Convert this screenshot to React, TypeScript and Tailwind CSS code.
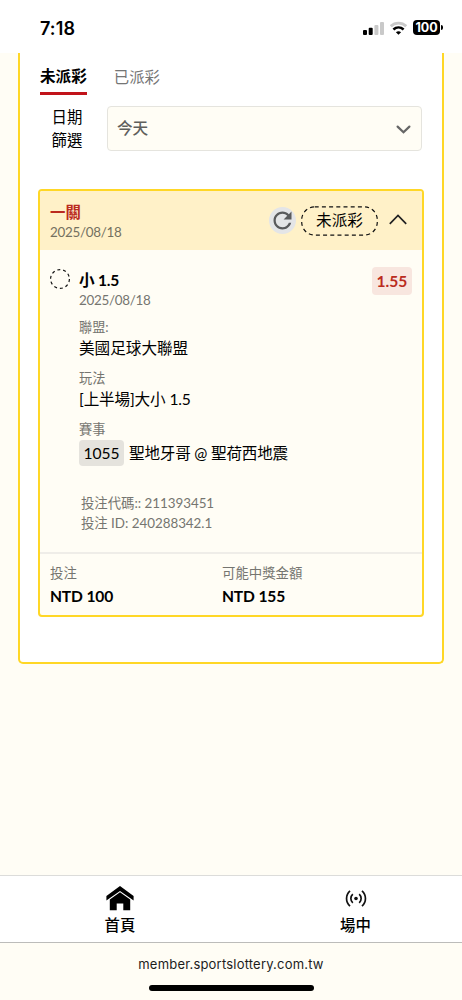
function StatusBar() {
  return (
    <div className="flex h-[53px] shrink-0 items-start justify-between bg-white pt-5 pr-[19px] pl-10">
      <span className="h-4 font-['Inter'] text-[18px] leading-[17px] font-semibold tracking-[0.1px] text-black">7:18</span>
      <div className="flex items-center gap-[6px]">
        <svg width="21" height="14" viewBox="0 0 21 14">
          <rect x="0" y="9" width="4" height="5" rx="1" fill="#000" />
          <rect x="5.7" y="6.8" width="4" height="7.2" rx="1" fill="#000" />
          <rect x="11.4" y="4" width="4" height="10" rx="1" fill="#c9c9c9" />
          <rect x="17" y="1" width="4" height="13" rx="1" fill="#c9c9c9" />
        </svg>
        <svg width="17" height="14" viewBox="0 0 17 14" fill="none">
          <path d="M0.8 5.3C5 1 12 1 16.2 5.3" stroke="#c9c9c9" strokeWidth="2.8" />
          <path d="M3.4 8.5C6.4 5.7 10.6 5.7 13.6 8.5" stroke="#000" strokeWidth="2.5" />
          <path d="M8.5 13.8L5.9 11.2C7.4 9.9 9.6 9.9 11.1 11.2Z" fill="#000" />
        </svg>
        <div className="flex items-center gap-px">
          <span className="flex h-[15px] w-[27px] items-center justify-center rounded-[4px] bg-black pt-px font-['Inter'] text-[12.5px] leading-[14px] font-bold text-white">100</span>
          <span className="h-[5px] w-[2px] rounded-r-full bg-black"></span>
        </div>
      </div>
    </div>
  );
}

function Tabs() {
  return (
    <div className="flex items-start gap-[27px] pl-5">
      <div className="border-b-[3px] border-[#c1131a] pb-[4px] text-[15.6px] leading-[24px] font-bold text-black">未派彩</div>
      <div className="pt-px text-[15.4px] leading-[24px] text-[#757575]">已派彩</div>
    </div>
  );
}

function DateFilter() {
  return (
    <div className="mt-[11px] flex pr-5 pl-[31px]">
      <div className="w-[56px] text-[15.4px] leading-[22.5px] text-black">
        <div className="w-[32px] text-center">日期</div>
        <div className="w-[32px] text-center">篩選</div>
      </div>
      <div className="flex h-[45px] flex-1 items-center justify-between rounded-[4px] border border-[#e5e4de] bg-[#fffdf5] pr-[10px] pl-[9px] text-[15.6px] font-medium text-[#5f5f5c]">
        <span>今天</span>
        <svg width="15" height="9" viewBox="0 0 15 9" fill="none" className="mt-px">
          <path d="M1.6 1.6L7.5 7.2L13.4 1.6" stroke="#666" strokeWidth="2.2" strokeLinecap="round" />
        </svg>
      </div>
    </div>
  );
}

function CardHeader() {
  return (
    <div className="flex h-[59px] items-start justify-between bg-[#fff1c8] pt-[11px] pr-[15px] pl-[10px]">
      <div>
        <div className="text-[15.4px] leading-5 font-bold text-[#ba2b20]">一關</div>
        <div className="text-[13.4px] leading-5 tracking-[-0.27px] text-[#73705f]">2025/08/18</div>
      </div>
      <div className="mt-[4px] flex items-center">
        <div className="mb-px h-[27px] w-[27px] rounded-full bg-[#e4e5e7]">
          <svg width="27" height="27" viewBox="0 0 24 24" fill="#595a5c">
            <path d="M17.65 6.35C16.2 4.9 14.21 4 12 4c-4.42 0-7.99 3.58-7.99 8s3.57 8 7.99 8c3.73 0 6.84-2.55 7.73-6h-2.08c-.82 2.33-3.04 4-5.65 4-3.31 0-6-2.69-6-6s2.69-6 6-6c1.66 0 3.14.69 4.22 1.78L13 11h7V4l-2.35 2.35z" />
          </svg>
        </div>
        <div className="relative ml-[5px] flex h-[30px] w-[77px] items-center justify-center text-[15.6px] text-black">
          <svg width="77" height="30" viewBox="0 0 77 30" fill="none" className="absolute inset-0">
            <rect x="0.7" y="0.9" width="75.6" height="28.2" rx="13" stroke="#111" strokeWidth="1.2" strokeDasharray="4 3.2" />
          </svg>
          <span>未派彩</span>
        </div>
        <svg width="18" height="11" viewBox="0 0 18 11" fill="none" className="mb-[4px] ml-[11px]">
          <path d="M0.8 9.8L9 1.4L17.2 9.8" stroke="#222" strokeWidth="1.7" />
        </svg>
      </div>
    </div>
  );
}

function CardBody() {
  return (
    <div className="flex h-[302px] items-start pt-[17px] pr-[10px] pl-[10px]">
      <svg width="20" height="20" viewBox="0 0 20 20" fill="none" className="mt-[2px] shrink-0">
        <circle cx="10" cy="10" r="9.4" stroke="#111" strokeWidth="1.2" strokeDasharray="3 2.9" />
      </svg>
      <div className="ml-[9px] flex-1 pt-[2px]">
        <div className="text-[15.6px] leading-[22px] font-bold tracking-[-0.25px] text-black">小 1.5</div>
        <div className="text-[13.4px] leading-[18px] tracking-[-0.27px] text-[#757570]">2025/08/18</div>
        <div className="mt-[9px] text-[13.2px] leading-[18px] text-[#757570]">聯盟:</div>
        <div className="text-[15.6px] leading-[24px] text-black">美國足球大聯盟</div>
        <div className="mt-[9px] text-[13.2px] leading-[18px] text-[#757570]">玩法</div>
        <div className="text-[15.6px] leading-[24px] tracking-[-0.14px] text-black">[上半場]大小 1.5</div>
        <div className="mt-[9px] text-[13.2px] leading-[18px] text-[#757570]">賽事</div>
        <div className="mt-[2px] flex h-[26px] items-center text-[15.6px] text-black">
          <span className="flex h-[26px] w-[45px] items-center justify-center rounded-[4px] bg-[#e5e3dd] pt-px">1055</span>
          <span className="mt-px ml-[5px] tracking-[-0.2px] whitespace-nowrap">聖地牙哥 @ 聖荷西地震</span>
        </div>
        <div className="mt-[27px] ml-[2px] text-[13.4px] leading-[20px] tracking-[-0.03px] text-[#757570]">
          <div>投注代碼:: 211393451</div>
          <div>投注 ID: 240288342.1</div>
        </div>
      </div>
      <div className="flex h-7 w-10 shrink-0 items-center justify-center rounded-[4px] bg-[#f8e6df] pt-px text-[15.6px] font-bold text-[#ba2b20]">1.55</div>
    </div>
  );
}

function CardFooter() {
  return (
    <div className="flex h-[63px] border-t-2 border-[#efede8] pt-[10px] pl-[10px]">
      <div className="w-[172px]">
        <div className="text-[13.4px] leading-[18px] text-[#757570]">投注</div>
        <div className="mt-[2px] text-[15.6px] leading-6 font-bold tracking-[-0.15px] text-black">NTD 100</div>
      </div>
      <div>
        <div className="text-[13.4px] leading-[18px] text-[#757570]">可能中獎金額</div>
        <div className="mt-[2px] text-[15.6px] leading-6 font-bold tracking-[-0.15px] text-black">NTD 155</div>
      </div>
    </div>
  );
}

function BottomNav() {
  return (
    <div className="flex h-[68px] shrink-0 overflow-hidden border-t border-b border-t-[#dcdcda] border-b-[#bcbcba] bg-white pl-[2px] text-[15.4px] font-medium text-black">
      <div className="flex w-[236px] shrink-0 flex-col items-center pt-[10px]">
        <svg width="28" height="25" viewBox="0 0 28 25" fill="#000">
          <path d="M14 0L27.6 10V14.4L14 5L0.4 14.4V10Z" />
          <path d="M14 6.3L24.2 13.4V24.3H17.3V17.4H10.7V24.3H3.8V13.4Z" />
        </svg>
        <div className="mt-[2px] leading-6">首頁</div>
      </div>
      <div className="flex w-[236px] shrink-0 flex-col items-center pt-[10px]">
        <svg width="22" height="25" viewBox="0 0 22 25" fill="none" stroke="#111" strokeWidth="1.7">
          <circle cx="11" cy="12.5" r="1.8" fill="#111" stroke="none" />
          <path d="M7.8 8.2C5.2 10.6 5.2 14.4 7.8 16.8M14.2 8.2C16.8 10.6 16.8 14.4 14.2 16.8" />
          <path d="M5 4.8C0.4 9 0.4 16 5 20.2M17 4.8C21.6 9 21.6 16 17 20.2" />
        </svg>
        <div className="mt-[2px] -ml-px leading-6">場中</div>
      </div>
    </div>
  );
}

function App() {
  return (
    <div className="flex h-[1000px] w-[462px] flex-col overflow-hidden bg-[#fffdf5] font-['Lato','Noto_Sans_CJK_TC',sans-serif]">
      <StatusBar />
      <div className="flex-1">
        <div className="mx-[18px] h-[611px] rounded-b-[5px] border-2 border-t-0 border-[#ffd726] bg-white pt-[11px]">
          <Tabs />
          <DateFilter />
          <div className="mx-[18px] mt-[38px] overflow-hidden rounded-[4px] border-2 border-[#ffd726] bg-[#fffdf5]">
            <CardHeader />
            <CardBody />
            <CardFooter />
          </div>
        </div>
      </div>
      <BottomNav />
      <div className="flex h-[57px] shrink-0 flex-col items-center">
        <div className="mt-[12px] font-['Inter'] text-[13px] leading-[18px] tracking-[0.2px] text-[#1c1c1c]">member.sportslottery.com.tw</div>
        <div className="mt-[12px] h-[6px] w-[165px] rounded-full bg-black"></div>
      </div>
    </div>
  );
}
export default App;
